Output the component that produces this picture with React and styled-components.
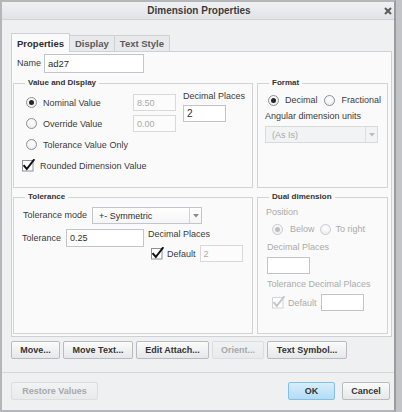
import React from 'react';
import styled, { createGlobalStyle } from 'styled-components';

const Global = createGlobalStyle`
  html, body { margin: 0; padding: 0; background: #c2c4c7; }
  body { font-family: "Liberation Sans", Arial, sans-serif; }
  * { box-sizing: border-box; }
`;

const Window = styled.div`
  width: 396px;
  height: 412px;
  border: 2px solid #b4b6b9;
  border-right-color: #9a9ca0;
  background: #eff0f2;
  display: flex;
  flex-direction: column;
  color: #363636;
  font-size: 9px;
`;

const TitleBar = styled.div`
  height: 18px;
  flex: none;
  display: grid;
  grid-template-columns: 1fr auto 1fr;
  align-items: center;
  padding: 0 2px 0 4px;
  background: linear-gradient(#f0f1f3, #e2e3e6);
  border-bottom: 1px solid #d0d1d4;
`;

const Title = styled.div`
  grid-column: 2;
  font-weight: bold;
  font-size: 10px;
  color: #3c3c3c;
`;

const CloseBox = styled.div`
  grid-column: 3;
  justify-self: end;
  display: flex;
  width: 8px;
  height: 8px;
`;

const Body = styled.div`
  flex: none;
  padding: 13px 2px 0 9px;
  display: flex;
  flex-direction: column;
`;

const TabBar = styled.div`
  display: flex;
  align-items: flex-end;
  height: 18px;
`;

const Tab = styled.div`
  height: ${p => (p.$active ? '19px' : '16px')};
  margin-bottom: ${p => (p.$active ? '-1px' : '0')};
  margin-left: ${p => (p.$first ? '0' : '-1px')};
  padding: 0 ${p => p.$pad}px;
  border: 1px solid #cfd0d3;
  border-bottom: none;
  background: ${p => (p.$active ? '#fafafa' : '#e8e9eb')};
  font-weight: bold;
  font-size: 9.5px;
  color: ${p => (p.$active ? '#2c2c2c' : '#5a5a5a')};
  display: flex;
  align-items: center;
  position: relative;
  z-index: ${p => (p.$active ? 1 : 0)};
`;

const Panel = styled.div`
  width: 381px;
  border: 1px solid #cfd0d3;
  background: #fafafa;
  padding: 2px 3px 2px 1px;
  display: flex;
  flex-direction: column;
`;

const NameRow = styled.div`
  display: flex;
  align-items: center;
  gap: 3px;
  padding-left: 4px;
`;

const Label = styled.span`
  line-height: 11px;
  white-space: nowrap;
  color: ${p => (p.$disabled ? '#ababab' : '#3a3a3a')};
  margin-left: ${p => p.$ml || 0}px;
`;

const Input = styled.div`
  width: ${p => p.$w}px;
  height: ${p => p.$h || 17}px;
  flex: none;
  border: 1px solid ${p => (p.$disabled ? '#d8d9db' : '#c2c5c9')};
  background: ${p => (p.$disabled ? '#fcfcfc' : '#ffffff')};
  color: ${p => (p.$disabled ? '#a9a9a9' : '#2e2e2e')};
  font-size: ${p => p.$fs || 9}px;
  display: flex;
  align-items: center;
  padding: 0 3px;
  margin-left: ${p => p.$ml || 0}px;
`;

const Groups = styled.div`
  margin-top: 5px;
  display: grid;
  grid-template-columns: 240px 131px;
  grid-template-rows: 110px 142px;
  column-gap: 4px;
  row-gap: 4px;
`;

const Group = styled.fieldset`
  margin: 0;
  padding: 0;
  min-width: 0;
  border: 1px solid #d2d3d5;
  display: block;
`;

const Legend = styled.legend`
  margin-left: 11px;
  padding: 0 3px;
  font-weight: bold;
  font-size: 8px;
  line-height: 10px;
  color: #333;
`;

const GroupContent = styled.div`
  padding: ${p => p.$pt}px 8px 0 ${p => p.$pl}px;
  display: flex;
  flex-direction: column;
`;

const ValueGrid = styled.div`
  display: grid;
  grid-template-columns: 107px 50px 43px;
  grid-auto-rows: 17px;
  row-gap: 4px;
  align-items: center;
`;

const OptionLabel = styled.label`
  display: flex;
  align-items: center;
  gap: ${p => (p.$gap != null ? p.$gap : 6)}px;
  white-space: nowrap;
  color: ${p => (p.$disabled ? '#ababab' : '#3a3a3a')};
  margin-left: ${p => p.$ml || 0}px;
  grid-column: ${p => p.$span || 'auto'};
`;

const RadioCircle = styled.span`
  width: 11px;
  height: 11px;
  flex: none;
  border-radius: 50%;
  border: 1px solid ${p => (p.$disabled ? '#cacbcd' : '#8d8f92')};
  background: radial-gradient(circle at 50% 35%, #ffffff, #e9eaec);
  display: flex;
  align-items: center;
  justify-content: center;
  &::after {
    content: '';
    width: 5px;
    height: 5px;
    border-radius: 50%;
    background: ${p => (p.$checked ? (p.$disabled ? '#bcbcbc' : '#262626') : 'transparent')};
  }
`;

const DecimalCell = styled.div`
  grid-column: 3;
  grid-row: 1 / span 2;
  align-self: start;
  margin-top: -3px;
  display: flex;
  flex-direction: column;
  gap: 3px;
`;

const Row = styled.div`
  display: flex;
  align-items: ${p => p.$align || 'center'};
  gap: ${p => p.$gap || 0}px;
  margin-top: ${p => p.$mt || 0}px;
  height: ${p => (p.$h ? p.$h + 'px' : 'auto')};
`;

const Column = styled.div`
  display: flex;
  flex-direction: column;
  margin-left: ${p => p.$ml || 0}px;
`;

const SelectBox = styled.div`
  width: ${p => p.$w}px;
  height: ${p => p.$h}px;
  flex: none;
  margin-top: ${p => p.$mt || 0}px;
  border: 1px solid ${p => (p.$disabled ? '#d8d9db' : '#c2c5c9')};
  background: ${p => (p.$disabled ? '#f2f3f4' : 'linear-gradient(#ffffff, #f5f5f6)')};
  color: ${p => (p.$disabled ? '#a9a9a9' : '#2e2e2e')};
  display: flex;
  align-items: stretch;
`;

const SelectText = styled.span`
  flex: 1;
  display: flex;
  align-items: center;
  padding-left: 6px;
`;

const SelectArrow = styled.span`
  width: 12px;
  flex: none;
  border-left: 1px solid ${p => (p.$disabled ? '#dedfe1' : '#cfd1d4')};
  display: flex;
  align-items: center;
  justify-content: center;
`;

const ButtonRow = styled.div`
  display: flex;
  gap: 3px;
  margin-top: 4px;
`;

const Button = styled.div`
  width: ${p => p.$w}px;
  height: 18px;
  flex: none;
  border: 1px solid ${p => (p.$primary ? '#86bfe6' : p.$disabled ? '#dcdddf' : '#b9bbbe')};
  border-radius: 2px;
  background: ${p =>
    p.$primary
      ? 'linear-gradient(#d6eefc, #b3dcf6)'
      : p.$disabled
      ? 'linear-gradient(#f1f2f3, #e9eaec)'
      : 'linear-gradient(#fbfbfb, #e6e7e9)'};
  color: ${p => (p.$disabled ? '#a6a8aa' : '#333')};
  font-weight: bold;
  font-size: 9px;
  display: flex;
  align-items: center;
  justify-content: center;
  white-space: nowrap;
`;

const Footer = styled.div`
  margin-top: 13px;
  border-top: 1px solid #d6d7da;
  padding: 9px 4px 0 9px;
  display: flex;
  justify-content: space-between;
`;

const FooterRight = styled.div`
  display: flex;
  gap: 7px;
`;

function Radio({ checked, disabled }) {
  return <RadioCircle $checked={checked} $disabled={disabled} />;
}

function Check({ disabled }) {
  const box = disabled ? '#d3d4d6' : '#8d8f92';
  const mark = disabled ? '#c4c5c7' : '#111';
  return (
    <svg width="13" height="13" viewBox="0 0 13 13" style={{ flex: 'none' }}>
      <rect x="0.5" y="1.5" width="10.5" height="10.5" fill="#fff" stroke={box} />
      <path d="M2.2 6.8 L4.8 10 L11.8 1" fill="none" stroke={mark} strokeWidth="2" strokeLinecap="square" />
    </svg>
  );
}

function Caret({ disabled }) {
  return (
    <svg width="6" height="4" viewBox="0 0 6 4">
      <path d="M0 0 H6 L3 3.5 Z" fill={disabled ? '#bdbdbd' : '#8a8a8a'} />
    </svg>
  );
}

function CloseIcon() {
  return (
    <svg width="8" height="8" viewBox="0 0 8 8">
      <path d="M1 1 L7 7 M7 1 L1 7" stroke="#5a5a5a" strokeWidth="2" />
    </svg>
  );
}

export default function App() {
  return (
    <>
      <Global />
      <Window>
        <TitleBar>
          <Title>Dimension Properties</Title>
          <CloseBox>
            <CloseIcon />
          </CloseBox>
        </TitleBar>
        <Body>
          <TabBar>
            <Tab $active $first $pad={5}>Properties</Tab>
            <Tab $pad={5}>Display</Tab>
            <Tab $pad={5}>Text Style</Tab>
          </TabBar>
          <Panel>
            <NameRow>
              <Label>Name</Label>
              <Input $w={100} $h={19} $fs={9.5}>ad27</Input>
            </NameRow>
            <Groups>
              <Group>
                <Legend>Value and Display</Legend>
                <GroupContent $pt={6} $pl={12}>
                  <ValueGrid>
                    <OptionLabel>
                      <Radio checked />
                      Nominal Value
                    </OptionLabel>
                    <Input $w={43} $disabled>8.50</Input>
                    <DecimalCell>
                      <Label>Decimal Places</Label>
                      <Input $w={43} $fs={10}>2</Input>
                    </DecimalCell>
                    <OptionLabel>
                      <Radio />
                      Override Value
                    </OptionLabel>
                    <Input $w={43} $disabled>0.00</Input>
                    <OptionLabel $span="1 / span 2">
                      <Radio />
                      Tolerance Value Only
                    </OptionLabel>
                    <OptionLabel $span="1 / span 3" $ml={-4} $gap={5}>
                      <Check />
                      Rounded Dimension Value
                    </OptionLabel>
                  </ValueGrid>
                </GroupContent>
              </Group>

              <Group>
                <Legend>Format</Legend>
                <GroupContent $pt={6} $pl={7}>
                  <Row $h={12}>
                    <OptionLabel $ml={3}>
                      <Radio checked />
                      Decimal
                    </OptionLabel>
                    <OptionLabel $ml={6} $gap={7}>
                      <Radio />
                      Fractional
                    </OptionLabel>
                  </Row>
                  <Row $mt={5}>
                    <Label>Angular dimension units</Label>
                  </Row>
                  <SelectBox $w={113} $h={17} $mt={4} $disabled>
                    <SelectText>(As Is)</SelectText>
                    <SelectArrow $disabled>
                      <Caret disabled />
                    </SelectArrow>
                  </SelectBox>
                </GroupContent>
              </Group>

              <Group>
                <Legend>Tolerance</Legend>
                <GroupContent $pt={5} $pl={9}>
                  <Row $gap={5}>
                    <Label>Tolerance mode</Label>
                    <SelectBox $w={110} $h={17}>
                      <SelectText>+- Symmetric</SelectText>
                      <SelectArrow>
                        <Caret />
                      </SelectArrow>
                    </SelectBox>
                  </Row>
                  <Row $mt={5} $align="flex-start">
                    <Row $gap={5}>
                      <Label $ml={-1}>Tolerance</Label>
                      <Input $w={78} $h={18}>0.25</Input>
                    </Row>
                    <Column $ml={4}>
                      <Row $h={11}>
                        <Label>Decimal Places</Label>
                      </Row>
                      <Row $mt={5}>
                        <OptionLabel $ml={3} $gap={3}>
                          <Check />
                          Default
                        </OptionLabel>
                        <Input $w={43} $ml={4} $disabled>2</Input>
                      </Row>
                    </Column>
                  </Row>
                </GroupContent>
              </Group>

              <Group>
                <Legend>Dual dimension</Legend>
                <GroupContent $pt={5} $pl={8}>
                  <Label $disabled>Position</Label>
                  <Row $mt={5} $h={12}>
                    <OptionLabel $ml={6} $gap={7} $disabled>
                      <Radio checked disabled />
                      Below
                    </OptionLabel>
                    <OptionLabel $ml={5} $gap={5} $disabled>
                      <Radio disabled />
                      To right
                    </OptionLabel>
                  </Row>
                  <Row $mt={7}>
                    <Label $disabled $ml={1}>Decimal Places</Label>
                  </Row>
                  <Row $mt={4}>
                    <Input $w={43} $ml={1}></Input>
                  </Row>
                  <Row $mt={5}>
                    <Label $disabled $ml={1}>Tolerance Decimal Places</Label>
                  </Row>
                  <Row $mt={4}>
                    <OptionLabel $ml={6} $gap={3} $disabled>
                      <Check disabled />
                      Default
                    </OptionLabel>
                    <Input $w={43} $ml={4}></Input>
                  </Row>
                </GroupContent>
              </Group>
            </Groups>
          </Panel>
          <ButtonRow>
            <Button $w={49}>Move...</Button>
            <Button $w={70}>Move Text...</Button>
            <Button $w={73}>Edit Attach...</Button>
            <Button $w={52} $disabled>Orient...</Button>
            <Button $w={80}>Text Symbol...</Button>
          </ButtonRow>
        </Body>
        <Footer>
          <Button $w={87} $disabled>Restore Values</Button>
          <FooterRight>
            <Button $w={47} $primary>OK</Button>
            <Button $w={48}>Cancel</Button>
          </FooterRight>
        </Footer>
      </Window>
    </>
  );
}
